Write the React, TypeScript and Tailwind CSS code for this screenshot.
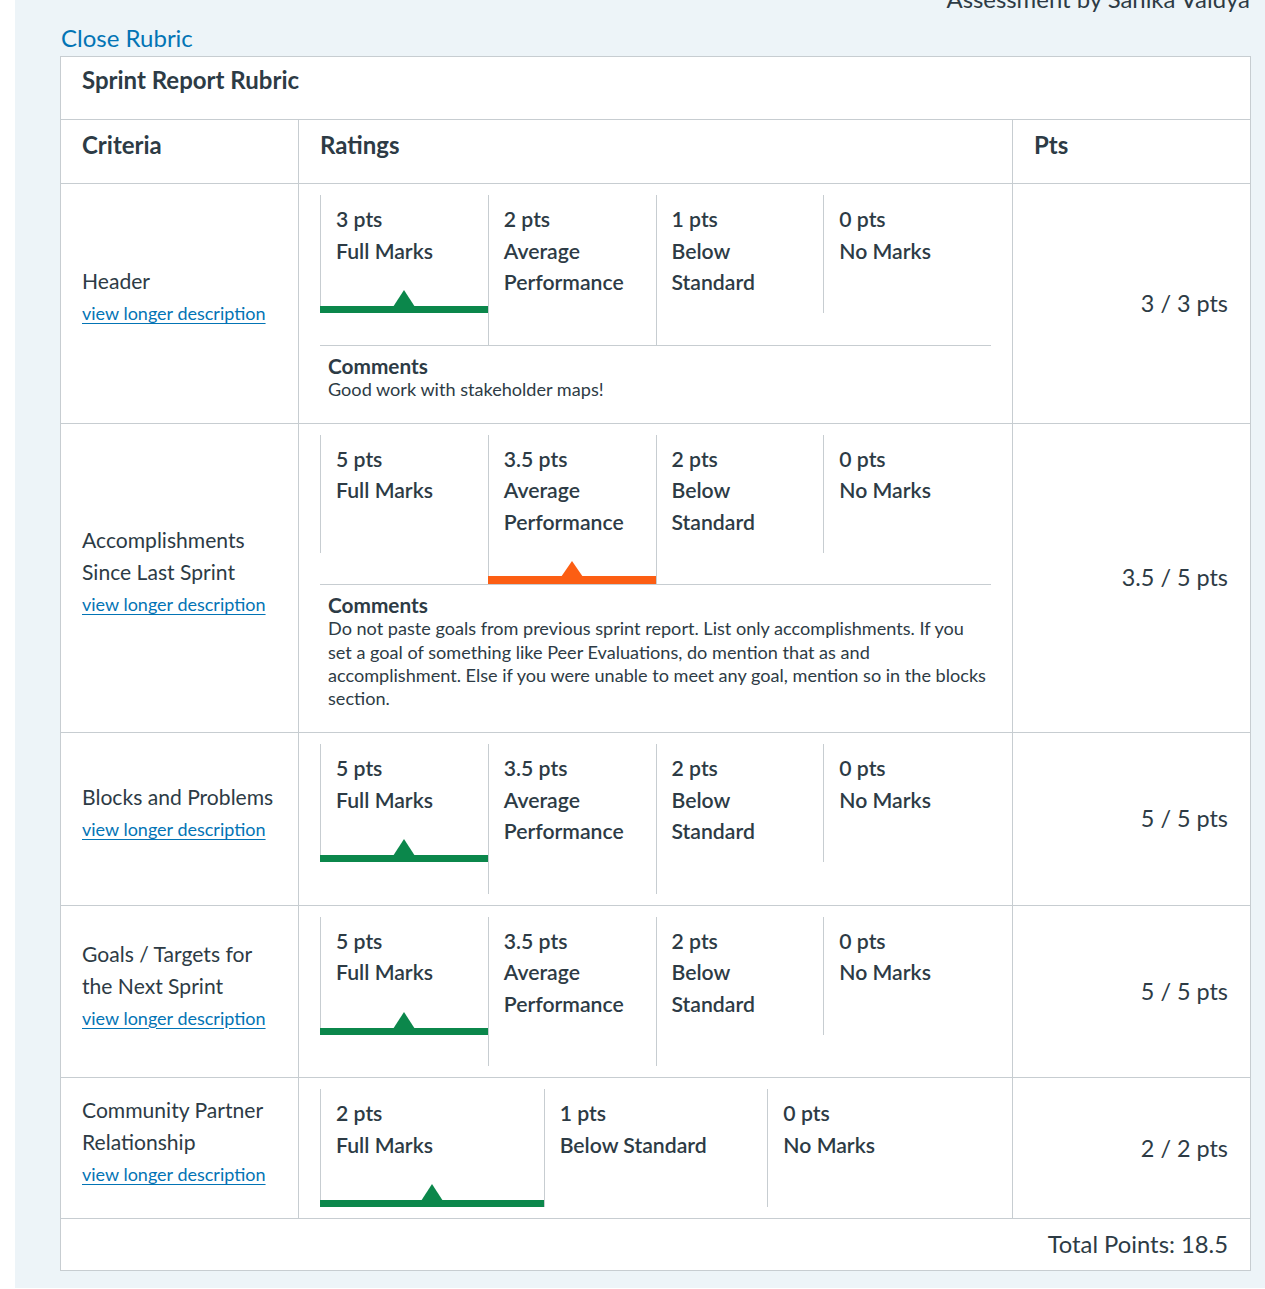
import React from "react";

type Tier = { pts: string; label: string };
type Row = {
  crit: string;
  tiers: Tier[];
  sel: number;
  color: "green" | "orange";
  score: string;
  comment?: string;
};

const four = (a: string, b: string, c: string, d: string): Tier[] => [
  { pts: a, label: "Full Marks" },
  { pts: b, label: "Average Performance" },
  { pts: c, label: "Below Standard" },
  { pts: d, label: "No Marks" },
];

const rows: Row[] = [
  {
    crit: "Header",
    tiers: four("3 pts", "2 pts", "1 pts", "0 pts"),
    sel: 0,
    color: "green",
    score: "3 / 3 pts",
    comment: "Good work with stakeholder maps!",
  },
  {
    crit: "Accomplishments Since Last Sprint",
    tiers: four("5 pts", "3.5 pts", "2 pts", "0 pts"),
    sel: 1,
    color: "orange",
    score: "3.5 / 5 pts",
    comment:
      "Do not paste goals from previous sprint report. List only accomplishments. If you set a goal of something like Peer Evaluations, do mention that as and accomplishment. Else if you were unable to meet any goal, mention so in the blocks section.",
  },
  {
    crit: "Blocks and Problems",
    tiers: four("5 pts", "3.5 pts", "2 pts", "0 pts"),
    sel: 0,
    color: "green",
    score: "5 / 5 pts",
  },
  {
    crit: "Goals / Targets for the Next Sprint",
    tiers: four("5 pts", "3.5 pts", "2 pts", "0 pts"),
    sel: 0,
    color: "green",
    score: "5 / 5 pts",
  },
  {
    crit: "Community Partner Relationship",
    tiers: [
      { pts: "2 pts", label: "Full Marks" },
      { pts: "1 pts", label: "Below Standard" },
      { pts: "0 pts", label: "No Marks" },
    ],
    sel: 0,
    color: "green",
    score: "2 / 2 pts",
  },
];

function TierCell({ tier, selected, color }: { tier: Tier; selected: boolean; color: "green" | "orange" }) {
  return (
    <div className="relative flex-1 border-l border-[#c7cdd1] pt-[9px] pb-[46px] pl-[15px] pr-[10px] text-[21.2px] leading-[31.5px] font-semibold text-[#2d3b45]">
      <div>{tier.pts}</div>
      <div>{tier.label}</div>
      {selected && (
        <>
          <div
            className={
              color === "green"
                ? "absolute bottom-0 -left-px right-0 h-[7px] bg-[#0b874b]"
                : "absolute bottom-0 -left-px right-0 h-[8px] bg-[#fc5e13]"
            }
          />
          <div
            className={
              color === "green"
                ? "absolute bottom-[6px] left-1/2 -translate-x-1/2 w-0 h-0 border-l-[11px] border-r-[11px] border-b-[17px] border-l-transparent border-r-transparent border-b-[#0b874b]"
                : "absolute bottom-[7px] left-1/2 -translate-x-1/2 w-0 h-0 border-l-[11px] border-r-[11px] border-b-[16px] border-l-transparent border-r-transparent border-b-[#fc5e13]"
            }
          />
        </>
      )}
    </div>
  );
}

function RubricRow({ row }: { row: Row }) {
  return (
    <div className="flex border-t border-[#c7cdd1]">
      <div className="w-[237px] shrink-0 flex items-center pl-[21px] pr-[18px] pb-[12px]">
        <div>
          <div className="text-[21.1px] leading-[32px] text-[#2d3b45]">{row.crit}</div>
          <a href="#" className="block text-[18px] leading-[32px] text-[#0374b5] underline underline-offset-[3px]">
            view longer description
          </a>
        </div>
      </div>
      <div className="flex-1 border-l border-[#c7cdd1] pt-[11px] pb-[11px] px-[21px]">
        <div className={row.comment ? "flex items-start border-b border-[#c7cdd1]" : "flex items-start"}>
          {row.tiers.map((t, i) => (
            <TierCell key={i} tier={t} selected={i === row.sel} color={row.color} />
          ))}
        </div>
        {row.comment && (
          <div className="pt-[8px] pb-[11px] pl-[8px] pr-[5px] text-[#2d3b45]">
            <div className="text-[20.8px] leading-[24px] font-bold">Comments</div>
            <div className="text-[18.1px] leading-[23.25px]">{row.comment}</div>
          </div>
        )}
      </div>
      <div className="w-[238px] shrink-0 border-l border-[#c7cdd1] flex items-center justify-end pr-[22px] text-[23.4px] text-[#2d3b45]">
        {row.score}
      </div>
    </div>
  );
}

export default function App() {
  return (
    <div className="bg-white pl-[15px] font-['Lato',sans-serif] text-[#2d3b45] overflow-hidden h-[1289px]">
      <div className="bg-[#edf4f8] h-[1288px] flex flex-col pl-[45px] pr-[14px]">
        <div className="mt-[-15px] text-right text-[23.9px] leading-[28px] text-[#2d3b45] pr-[1px]">
          Assessment by Sanika Vaidya
        </div>
        <a href="#" className="mt-[10px] text-[24px] leading-[29px] text-[#0374b5] self-start ml-[1px]">
          Close Rubric
        </a>
        <div className="mt-[4px] w-[1191px] bg-white border border-[#c7cdd1]">
          <div className="h-[62px] pl-[21px] pt-[6px] text-[24px] leading-[34px] font-bold">
            Sprint Report Rubric
          </div>
          <div className="flex border-t border-[#c7cdd1] h-[64px] text-[24px] leading-[34px] font-bold">
            <div className="w-[237px] shrink-0 pl-[21px] pt-[8px]">Criteria</div>
            <div className="flex-1 border-l border-[#c7cdd1] pl-[21px] pt-[8px]">Ratings</div>
            <div className="w-[238px] shrink-0 border-l border-[#c7cdd1] pl-[21px] pt-[8px]">Pts</div>
          </div>
          {rows.map((r, i) => (
            <RubricRow key={i} row={r} />
          ))}
          <div className="border-t border-[#c7cdd1] h-[52px] flex items-center justify-end pr-[22px] text-[23.8px]">
            Total Points: 18.5
          </div>
        </div>
      </div>
    </div>
  );
}
